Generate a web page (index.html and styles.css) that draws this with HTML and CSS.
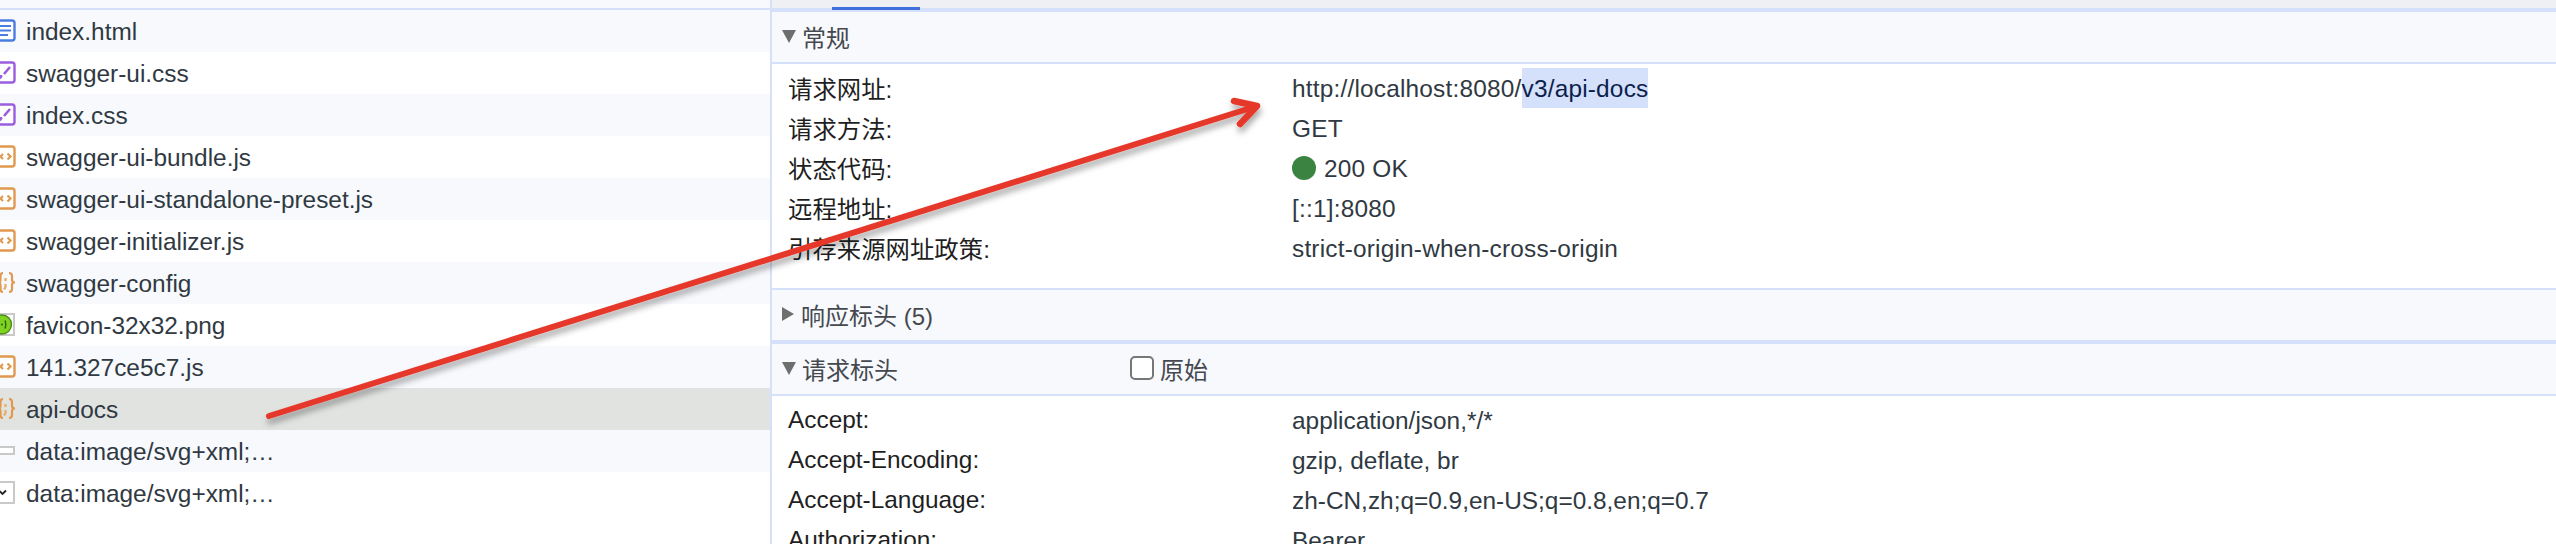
FILE: index.html
```html
<!DOCTYPE html>
<html lang="zh-CN">
<head>
<meta charset="utf-8">
<title>Network</title>
<link rel="stylesheet" href="styles.css">
</head>
<body>
<svg width="0" height="0" class="defs">
  <symbol id="i-doc" viewBox="0 0 24 24"><rect x="1.500" y="1.500" width="21" height="20" rx="2.500" fill="#fff" stroke="#4a7de0" stroke-width="2.400"/><path d="M0 7h19M0 11.500h19M0 16h16" stroke="#4a7de0" stroke-width="2.200" fill="none"/></symbol>
  <symbol id="i-css" viewBox="0 0 24 24"><rect x="1.500" y="1.500" width="21" height="20" rx="2.500" fill="#fff" stroke="#9a5de0" stroke-width="2.400"/><path d="M18 6 L12 13" stroke="#9a5de0" stroke-width="2.600" fill="none"/><path d="M3 18 Q4 13.500 10 14 L10.500 15.500 Q9 20 3 18Z" fill="#9a5de0"/></symbol>
  <symbol id="i-js" viewBox="0 0 24 24"><rect x="1.500" y="1.500" width="21" height="20" rx="2.500" fill="#fff" stroke="#e0994f" stroke-width="2.400"/><path d="M11 9 L8.500 11.500 L11 14M15.500 8.500 L18.500 11.500 L15.500 14.500" stroke="#e0994f" stroke-width="2.200" fill="none"/></symbol>
  <symbol id="i-cfg" viewBox="0 0 24 24"><path d="M11 2 Q8.500 2 8.500 5 V9 Q8.500 11.500 6 11.500 Q8.500 11.500 8.500 14 V18 Q8.500 21 11 21M17 2 Q20 2 20 5 V9 Q20 11.500 23 11.500 Q20 11.500 20 14 V18 Q20 21 17 21" stroke="#e0994f" stroke-width="2.200" fill="none"/><path d="M13.500 7v3M13.500 13v3 l-1.500 2.500" stroke="#e6b070" stroke-width="2.400" fill="none"/></symbol>
  <symbol id="i-png" viewBox="0 0 24 24"><rect x="1" y="1" width="21" height="21" fill="#fff" stroke="#c9c9c9" stroke-width="2"/><circle cx="10" cy="11.500" r="9.500" fill="#7ed321" stroke="#4f8a1e" stroke-width="1.400"/><path d="M7 7.500 Q5.500 11.500 7 15.500M13 7.500 Q14.500 11.500 13 15.500" stroke="#2f5f10" stroke-width="1.400" fill="none"/><path d="M9 11.500h2" stroke="#2f5f10" stroke-width="1.600"/></symbol>
  <symbol id="i-dash" viewBox="0 0 24 24"><rect x="1" y="8" width="21" height="7" fill="#fff" stroke="#c9c9c9" stroke-width="2"/></symbol>
  <symbol id="i-chev" viewBox="0 0 24 24"><rect x="1" y="1" width="21" height="21" fill="#fff" stroke="#c9c9c9" stroke-width="2"/><path d="M7 9.500 L10.500 13 L14 9.500" stroke="#222" stroke-width="1.800" fill="none"/></symbol>
</svg>

<main class="page">
  <aside class="files">
    <div class="files-top"></div>
    <ul class="file-list">
      <li class="file"><svg class="ico"><use href="#i-doc"/></svg><span>index.html</span></li>
      <li class="file"><svg class="ico"><use href="#i-css"/></svg><span>swagger-ui.css</span></li>
      <li class="file"><svg class="ico"><use href="#i-css"/></svg><span>index.css</span></li>
      <li class="file"><svg class="ico"><use href="#i-js"/></svg><span>swagger-ui-bundle.js</span></li>
      <li class="file"><svg class="ico"><use href="#i-js"/></svg><span>swagger-ui-standalone-preset.js</span></li>
      <li class="file"><svg class="ico"><use href="#i-js"/></svg><span>swagger-initializer.js</span></li>
      <li class="file"><svg class="ico"><use href="#i-cfg"/></svg><span>swagger-config</span></li>
      <li class="file"><svg class="ico"><use href="#i-png"/></svg><span>favicon-32x32.png</span></li>
      <li class="file"><svg class="ico"><use href="#i-js"/></svg><span>141.327ce5c7.js</span></li>
      <li class="file selected"><svg class="ico"><use href="#i-cfg"/></svg><span>api-docs</span></li>
      <li class="file"><svg class="ico"><use href="#i-dash"/></svg><span>data:image/svg+xml;…</span></li>
      <li class="file"><svg class="ico"><use href="#i-chev"/></svg><span>data:image/svg+xml;…</span></li>
    </ul>
  </aside>

  <section class="details">
    <div class="tabs"><span class="tab-active"></span></div>

    <header class="sec-head first"><i class="tri down"></i><span>常规</span></header>
    <div class="rows general">
      <div class="row"><span class="key">请求网址:</span><span class="val">http://localhost:8080/<mark class="sel">v3/api-docs</mark></span></div>
      <div class="row"><span class="key">请求方法:</span><span class="val">GET</span></div>
      <div class="row"><span class="key">状态代码:</span><span class="val"><i class="dot"></i>200 OK</span></div>
      <div class="row"><span class="key">远程地址:</span><span class="val">[::1]:8080</span></div>
      <div class="row"><span class="key">引荐来源网址政策:</span><span class="val">strict-origin-when-cross-origin</span></div>
    </div>

    <header class="sec-head closed"><i class="tri right"></i><span>响应标头 (5)</span></header>

    <header class="sec-head req"><i class="tri down"></i><span class="req-title">请求标头</span><i class="box"></i><span>原始</span></header>
    <div class="rows headers">
      <div class="row"><span class="key">Accept:</span><span class="val">application/json,*/*</span></div>
      <div class="row"><span class="key">Accept-Encoding:</span><span class="val">gzip, deflate, br</span></div>
      <div class="row"><span class="key">Accept-Language:</span><span class="val">zh-CN,zh;q=0.9,en-US;q=0.8,en;q=0.7</span></div>
      <div class="row"><span class="key">Authorization:</span><span class="val">Bearer</span></div>
    </div>
  </section>
</main>

<svg class="arrow" width="2556" height="544" viewBox="0 0 2556 544">
  <defs><filter id="sh" x="-5%" y="-20%" width="110%" height="140%"><feDropShadow dx="1" dy="5" stdDeviation="3" flood-color="#000" flood-opacity=".35"/></filter></defs>
  <g filter="url(#sh)" fill="none" stroke="#e5392b" stroke-linecap="round" stroke-linejoin="round">
    <path d="M269 416 L1254 107" stroke-width="6"/>
    <path d="M1234 101 L1257 106 L1240 124" stroke-width="6.500"/>
  </g>
</svg>
</body>
</html>
```

FILE: styles.css
```css
* { box-sizing: border-box; }
html, body { margin: 0; height: 100%; }
body {
  width: 2556px;
  height: 544px;
  overflow: hidden;
  background: #fff;
  font-family: "Liberation Sans", "Noto Sans CJK SC", sans-serif;
  font-size: 24.4px;
  color: #303942;
  position: relative;
}
.defs { position: absolute; }
.page { display: flex; height: 544px; }

.files { width: 770px; flex: none; overflow: hidden; }
.files-top { height: 10px; background: #f8f9fd; border-bottom: 2px solid #d5e0fa; }
.file-list { list-style: none; margin: 0; padding: 0; }
.file {
  height: 42px;
  display: flex;
  align-items: center;
  gap: 10px;
  margin-left: -8px;
  background: #fff;
}
.file span { padding-top: 2px; }
.file:nth-child(odd) { background: #f7f9fd; }
.file.selected { background: #e1e3e1; }
.ico { width: 24px; height: 24px; flex: none; overflow: visible; }

.details { flex: 1; min-width: 0; border-left: 2px solid #d5e0fa; overflow: hidden; }
.tabs { height: 8px; background: #eef0f4; position: relative; }
.tab-active { position: absolute; left: 60px; top: 7px; width: 88px; height: 3px; background: #3f6fdc; z-index: 1; }
.sec-head {
  height: 50px;
  display: flex;
  align-items: center;
  padding-left: 10px;
  padding-bottom: 2px;
  background: #f7f9fd;
  color: #45494f;
  border-bottom: 2px solid #d5e0fa;
  font-size: 24px;
}
.sec-head.first { height: 56px; border-top: 4px solid #d5e0fa; }
.sec-head.closed { height: 56px; border-top: 2px solid #d5e0fa; border-bottom: 4px solid #d5e0fa; }
.sec-head.req { height: 52px; }

.tri { display: block; flex: none; margin-right: 6px; }
.tri.down { width: 0; height: 0; border-left: 7px solid transparent; border-right: 7px solid transparent; border-top: 13px solid #6e6e6e; }
.tri.right { width: 0; height: 0; margin-right: 7px; border-top: 7px solid transparent; border-bottom: 7px solid transparent; border-left: 12px solid #6e6e6e; }
.req-title { width: 328px; }
.box { width: 24px; height: 24px; border: 2px solid #767676; border-radius: 5px; margin-right: 6px; background: #fff; flex: none; }

.rows { padding: 4px 0 0 16px; }
.rows.general { height: 224px; }
.row { height: 40px; display: flex; align-items: center; }
.key { width: 504px; flex: none; color: #1f1f1f; }
.general .key { padding-bottom: 2px; }
.val { display: flex; align-items: center; white-space: pre; height: 40px; padding-top: 2px; }
.general .val { letter-spacing: .2px; }
.sel { background: #d5e0fa; color: #0b1f4d; height: 40px; line-height: 42px; margin-top: -2px; }
.dot { width: 24px; height: 24px; border-radius: 50%; background: #3a8341; margin: -2px 8px 0 0; flex: none; }

.arrow { position: absolute; left: 0; top: 0; pointer-events: none; }
```
